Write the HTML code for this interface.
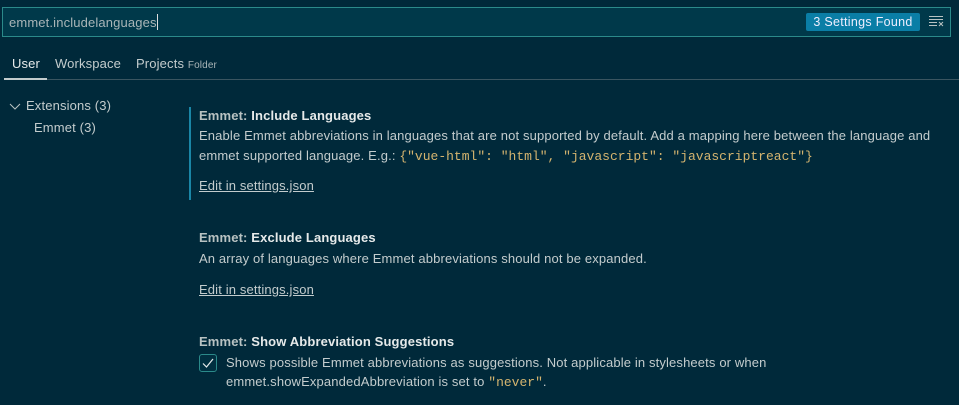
<!DOCTYPE html>
<html><head><style>
body{margin:0;width:959px;height:405px;background:#00293a;font-family:"Liberation Sans",sans-serif;font-size:13px;color:#c3cccd;position:relative;overflow:hidden}
.a{position:absolute;white-space:nowrap;letter-spacing:0.14px}
.mono{font-family:"Liberation Mono",monospace;color:#d4b46f;font-size:13px;letter-spacing:0}
b{color:#e6eaea}
.t{color:#b8c2c2;font-weight:bold}
u{text-decoration:underline}
</style></head><body>
<div class="a" style="left:2px;top:7px;width:947px;height:28px;background:#00394a;border:1px solid #2b8a8a"></div>
<div class="a" style="left:9px;top:14px;color:#a9b5b7">emmet.includelanguages<span style="display:inline-block;width:1px;height:16px;background:#ddd;vertical-align:-3px"></span></div>
<div class="a" style="left:806px;top:13px;width:114px;height:18px;background:#0a7ea6;border-radius:2px;color:#eef;font-size:12.5px;line-height:18px;text-align:center;letter-spacing:0.3px">3 Settings Found</div>
<svg class="a" style="left:928px;top:14px" width="16" height="14"><g stroke="#b8c2c2" stroke-width="1"><line x1="1" y1="2.5" x2="15" y2="2.5"/><line x1="1" y1="5.5" x2="15" y2="5.5"/><line x1="1" y1="8.5" x2="9" y2="8.5"/><line x1="1" y1="11.5" x2="9" y2="11.5"/><line x1="11" y1="8" x2="15" y2="12"/><line x1="15" y1="8" x2="11" y2="12"/></g></svg>
<div class="a" style="left:12px;top:56px;color:#e6eaea">User</div>
<div class="a" style="left:55px;top:56px">Workspace</div>
<div class="a" style="left:136px;top:56px">Projects <span style="font-size:10px;color:#a9b5b7">Folder</span></div>
<div class="a" style="left:4px;top:78px;width:43px;height:2px;background:#c3cccd"></div>
<div class="a" style="left:47px;top:79px;width:912px;height:1px;background:#3a5560"></div>
<svg class="a" style="left:9px;top:101px" width="12" height="10"><path d="M1 3 L6 8 L11 3" stroke="#b8c2c2" fill="none"/></svg>
<div class="a" style="left:26px;top:98px">Extensions (3)</div>
<div class="a" style="left:34px;top:120px">Emmet (3)</div>
<div class="a" style="left:189px;top:107px;width:2px;height:93px;background:#1a86a6"></div>
<div class="a" style="left:199px;top:108px"><span class="t">Emmet: </span><b>Include Languages</b></div>
<div class="a" style="left:199px;top:128px">Enable Emmet abbreviations in languages that are not supported by default. Add a mapping here between the language and</div>
<div class="a" style="left:199px;top:148px">emmet supported language. E.g.: <span class="mono">{"vue-html": "html", "javascript": "javascriptreact"}</span></div>
<div class="a" style="left:199px;top:178px"><u>Edit in settings.json</u></div>
<div class="a" style="left:199px;top:230px"><span class="t">Emmet: </span><b>Exclude Languages</b></div>
<div class="a" style="left:199px;top:251px">An array of languages where Emmet abbreviations should not be expanded.</div>
<div class="a" style="left:199px;top:282px"><u>Edit in settings.json</u></div>
<div class="a" style="left:199px;top:334px"><span class="t">Emmet: </span><b>Show Abbreviation Suggestions</b></div>
<div class="a" style="left:199px;top:354px;width:16px;height:16px;background:#002f40;border:1px solid #2b8a8a;border-radius:3px"></div>
<svg class="a" style="left:201px;top:356px" width="14" height="14"><path d="M2 7.5 L5.5 11 L12 3" stroke="#e6eaea" stroke-width="1.2" fill="none"/></svg>
<div class="a" style="left:226px;top:355px">Shows possible Emmet abbreviations as suggestions. Not applicable in stylesheets or when</div>
<div class="a" style="left:226px;top:374px">emmet.showExpandedAbbreviation is set to <span class="mono">"never"</span>.</div>
</body></html>
